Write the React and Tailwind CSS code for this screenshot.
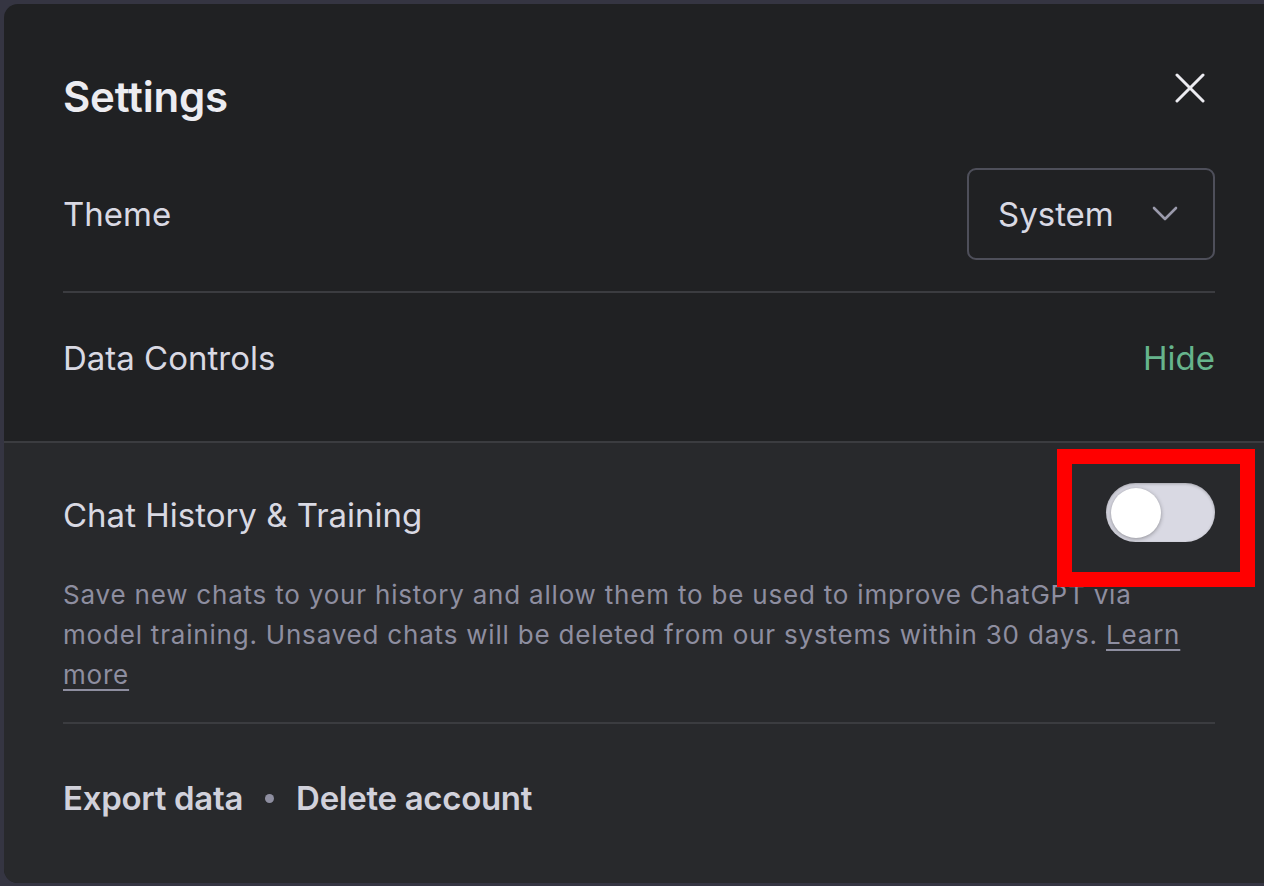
import React, { useState } from "react";

const font = { fontFamily: "Inter, 'Noto Sans', sans-serif" };

function CloseIcon() {
  return (
    <svg width="30" height="30" viewBox="0 0 30 30" fill="none" stroke="#ececf1" strokeWidth="3" strokeLinecap="round">
      <path d="M2 2 28 28M28 2 2 28" />
    </svg>
  );
}

function Chevron() {
  return (
    <svg width="26" height="16" viewBox="0 0 26 16" fill="none" stroke="#9a9aab" strokeWidth="2.6" strokeLinecap="round" strokeLinejoin="round">
      <path d="M2 2 13 13 24 2" />
    </svg>
  );
}

export default function App() {
  const [history, setHistory] = useState(false);

  return (
    <div className="w-[1264px] h-[886px] overflow-hidden bg-[#353542] pt-[4px] pl-[4px]" style={font}>
      <div className="h-[879px] bg-[#202123] rounded-l-[14px] overflow-hidden flex flex-col">
        <div className="pl-[59px] pr-[49px]">
          <div className="flex justify-between items-start pt-[69px]">
            <h1 className="text-[42px] leading-[48px] font-semibold text-[#ececf1] tracking-[-0.2px]">Settings</h1>
            <button className="mr-[10px]"><CloseIcon /></button>
          </div>

          <div className="flex justify-between items-center pt-[47px] pb-[31px] border-b-2 border-[#3b3c40]">
            <span className="text-[33px] leading-[48px] text-[#d9d9e3]">Theme</span>
            <button className="w-[248px] h-[92px] border-2 border-[#4e4f5a] rounded-[9px] flex items-center justify-between pl-[29px] pr-[35px]">
              <span className="text-[33px] leading-[48px] text-[#d9d9e3]">System</span>
              <Chevron />
            </button>
          </div>

          <div className="flex justify-between items-center pt-[41px] pb-[59px]">
            <span className="text-[33px] leading-[48px] text-[#d9d9e3]">Data Controls</span>
            <button className="text-[33px] leading-[48px] text-[#66b48c]">Hide</button>
          </div>
        </div>

        <div className="flex-1 bg-[#28292c] border-t-2 border-[#3b3c40] pl-[59px] pr-[49px]">
          <div className="flex justify-between items-center pt-[40px] relative">
            <span className="text-[33px] leading-[48px] text-[#d9d9e3] mt-[4px]">Chat History &amp; Training</span>
            <button
              onClick={() => setHistory(!history)}
              className="w-[109px] h-[59px] rounded-full bg-[#d9d9e3] flex items-center px-[5px] shadow-[inset_0_1px_3px_rgba(0,0,0,0.25)]"
            >
              <span className="block w-[50px] h-[50px] rounded-full bg-white shadow-[0_1px_4px_rgba(0,0,0,0.35)]" />
            </button>
            <div className="absolute left-[994px] top-[6px] w-[198px] h-[138px] border-[15px] border-[#ff0000] pointer-events-none" />
          </div>

          <p className="mt-[33px] text-[26px] leading-[40px] tracking-[0.8px] text-[#8e8ea0]">
            Save new chats to your history and allow them to be used to improve ChatGPT via model training. Unsaved chats will be deleted from our systems within 30 days.{" "}
            <a className="underline underline-offset-[5px] decoration-[2px]">Learn more</a>
          </p>

          <div className="mt-[27px] border-t-2 border-[#3b3c40]" />

          <div className="flex items-center pt-[54px] text-[33px] leading-[40px] font-semibold text-[#d1d1db]">
            <button className="tracking-[-0.3px]">Export data</button>
            <span className="mx-[22px] w-[9px] h-[9px] rounded-full bg-[#8e8ea0]" />
            <button className="tracking-[-0.3px]">Delete account</button>
          </div>
        </div>
      </div>
    </div>
  );
}
